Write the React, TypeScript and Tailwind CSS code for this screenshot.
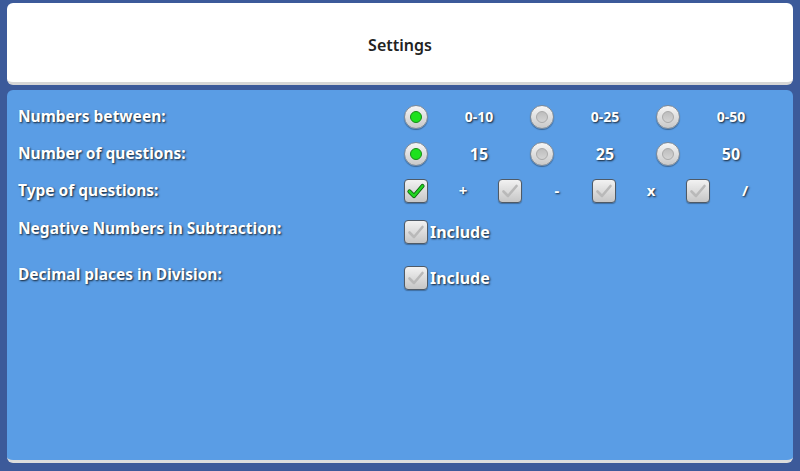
import React from 'react';

const font = { fontFamily: '"Noto Sans", "Open Sans", sans-serif' };

const Radio: React.FC<{ on?: boolean }> = ({ on }) => (
  <div className="w-6 h-6 shrink-0 rounded-full border border-[#7f8a96] bg-gradient-to-b from-[#f6f6f6] to-[#c9c9c9] shadow-[0_1px_1px_rgba(0,0,0,0.35)] flex items-center justify-center">
    {on ? (
      <div className="w-[12px] h-[12px] rounded-full bg-[#1ee21e] border border-[#178a17]" />
    ) : (
      <div className="w-[12px] h-[12px] rounded-full bg-gradient-to-b from-[#bdbdbd] to-[#d4d4d4] border border-[#a9a9a9]" />
    )}
  </div>
);

const Check: React.FC<{ on?: boolean }> = ({ on }) => (
  <div className="w-6 h-6 shrink-0 rounded-[4px] border border-[#4f5a66] bg-gradient-to-b from-[#f2f2f2] to-[#c6c6c6] shadow-[0_1px_1px_rgba(0,0,0,0.3)] flex items-center justify-center">
    <svg width="20" height="20" viewBox="0 0 20 20">
      {on ? (
        <>
          <path d="M3.5 10.5 L8 15 L16.5 5" fill="none" stroke="#0b5a0b" strokeWidth="4.2" strokeLinecap="round" strokeLinejoin="round" />
          <path d="M3.5 10.5 L8 15 L16.5 5" fill="none" stroke="#22d322" strokeWidth="2.6" strokeLinecap="round" strokeLinejoin="round" />
        </>
      ) : (
        <path d="M3.5 10.5 L8 15 L16.5 5" fill="none" stroke="#b9b9b9" strokeWidth="2.6" strokeLinecap="round" strokeLinejoin="round" />
      )}
    </svg>
  </div>
);

const shadow = '[text-shadow:1px_1px_2px_rgba(0,0,0,0.8)]';

const Label: React.FC<{ text: string; shift?: boolean }> = ({ text, shift }) => (
  <div className={`w-[397px] shrink-0 pl-[11px] text-[15.5px] font-bold text-white ${shadow} ${shift ? '-mt-[6px]' : ''}`}>
    {text}
  </div>
);

const RadioRow: React.FC<{ opts: string[]; small?: boolean }> = ({ opts, small }) => (
  <div className="flex items-center">
    {opts.map((o, i) => (
      <div key={o} className="flex items-center">
        <Radio on={i === 0} />
        <div className={`w-[102px] text-center font-bold text-white ${shadow} ${small ? 'text-[14px]' : 'text-[16px]'}`}>{o}</div>
      </div>
    ))}
  </div>
);

export default function App() {
  return (
    <div style={font} className="w-[800px] h-[471px] bg-[#3c5a9a] px-[7px] pt-[3px] flex flex-col overflow-hidden">
      <div className="h-[82px] shrink-0 bg-white rounded-[6px] border-b-[3px] border-[#d6d6d6] flex items-center justify-center pt-1">
        <span className="text-[16px] font-semibold text-[#222]">Settings</span>
      </div>
      <div className="mt-[5px] h-[373px] shrink-0 bg-[#5a9de5] rounded-[6px] border-b-[3px] border-[#dcdcdc] pt-[8px] flex flex-col">
        <div className="h-[37px] flex items-center">
          <Label text="Numbers between:" />
          <RadioRow opts={['0-10', '0-25', '0-50']} small />
        </div>
        <div className="h-[37px] flex items-center">
          <Label text="Number of questions:" />
          <RadioRow opts={['15', '25', '50']} />
        </div>
        <div className="h-[37px] flex items-center">
          <Label text="Type of questions:" />
          <div className="flex items-center">
            {['+', '-', 'x', '/'].map((o, i) => (
              <div key={o} className="flex items-center">
                <Check on={i === 0} />
                <div className={`w-[70px] text-center text-[15px] font-bold text-white ${shadow}`}>{o}</div>
              </div>
            ))}
          </div>
        </div>
        <div className="h-[46px] flex items-center">
          <Label text="Negative Numbers in Subtraction:" shift />
          <Check />
          <span className={`ml-[2px] text-[16px] font-bold text-white ${shadow}`}>Include</span>
        </div>
        <div className="h-[46px] flex items-center">
          <Label text="Decimal places in Division:" shift />
          <Check />
          <span className={`ml-[2px] text-[16px] font-bold text-white ${shadow}`}>Include</span>
        </div>
      </div>
    </div>
  );
}
